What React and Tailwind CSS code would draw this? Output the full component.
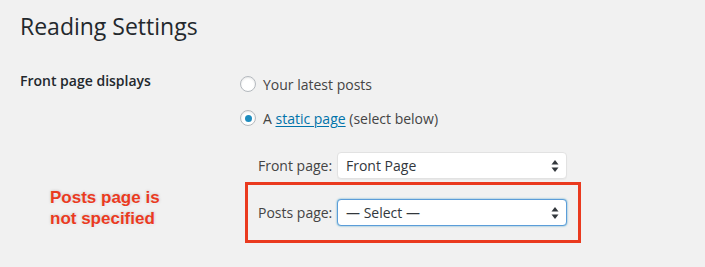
import React from "react";

function Arrows() {
  return (
    <svg width="8" height="13" viewBox="0 0 8 13" className="absolute right-[7px] top-1/2 -translate-y-1/2">
      <path d="M4 0.5 L7.5 5 L0.5 5 Z" fill="#32373c" />
      <path d="M4 12.5 L7.5 8 L0.5 8 Z" fill="#32373c" />
    </svg>
  );
}

function Radio({ checked }) {
  return (
    <span className="relative inline-flex h-[16px] w-[16px] items-center justify-center rounded-full border border-[#b4b9be] bg-white shadow-[inset_0_1px_2px_rgba(0,0,0,0.1)]">
      {checked && <span className="h-[7px] w-[7px] rounded-full bg-[#1e8cbe]" />}
    </span>
  );
}

function Select({ value, focused }) {
  return (
    <div
      className={
        "relative flex h-[27px] w-[230px] items-center rounded-[4px] bg-white pl-[8px] text-[14px] text-[#32373c] " +
        (focused
          ? "border border-[#5b9dd9] shadow-[0_0_2px_rgba(30,140,190,0.8)]"
          : "border border-[#e2e2e2] shadow-[0_1px_1px_rgba(0,0,0,0.04)]")
      }
    >
      {value}
      <Arrows />
    </div>
  );
}

export default function App() {
  return (
    <div
      className="relative h-[267px] w-[705px] overflow-hidden bg-[#f1f1f1] text-[#23282d]"
      style={{ fontFamily: '"Open Sans", sans-serif' }}
    >
      <div className="pl-[20px] pt-[12px]">
        <h1 className="text-[23px] leading-[29px] font-normal text-[#23282d]">Reading Settings</h1>
        <div className="mt-[28px] flex">
          <div className="w-[220px] pt-[2px] text-[14px] font-semibold leading-[20px]">Front page displays</div>
          <div className="flex flex-col text-[14px] text-[#444]">
            <label className="mt-[3px] flex h-[24px] items-center gap-[7px]">
              <Radio />
              <span>Your latest posts</span>
            </label>
            <label className="mt-[10px] flex h-[24px] items-center gap-[7px]">
              <Radio checked />
              <span>
                A <a className="text-[#0073aa] underline underline-offset-[2px] decoration-[1px]">static page</a> (select below)
              </span>
            </label>
            <div className="mt-[22px] flex flex-col gap-[20px] pl-[18px]">
              <div className="flex items-center">
                <span className="w-[79px] whitespace-nowrap">Front page:</span>
                <Select value="Front Page" />
              </div>
              <div className="flex items-center">
                <span className="w-[79px] whitespace-nowrap">Posts page:</span>
                <Select value="— Select —" focused />
              </div>
            </div>
          </div>
        </div>
      </div>

      <div className="pointer-events-none absolute left-[245px] top-[182px] h-[61px] w-[336px] border-[3px] border-[#ea3a1f]" />

      <div
        className="absolute left-[50px] top-[187px] text-[17px] font-bold leading-[21px] text-[#ea3a1f]"
        style={{ fontFamily: '"Liberation Sans", Arial, sans-serif', textShadow: "0 1px 2px rgba(255,255,255,0.9), 0 0 3px rgba(0,0,0,0.25)" }}
      >
        Posts page is
        <br />
        not specified
      </div>
    </div>
  );
}
